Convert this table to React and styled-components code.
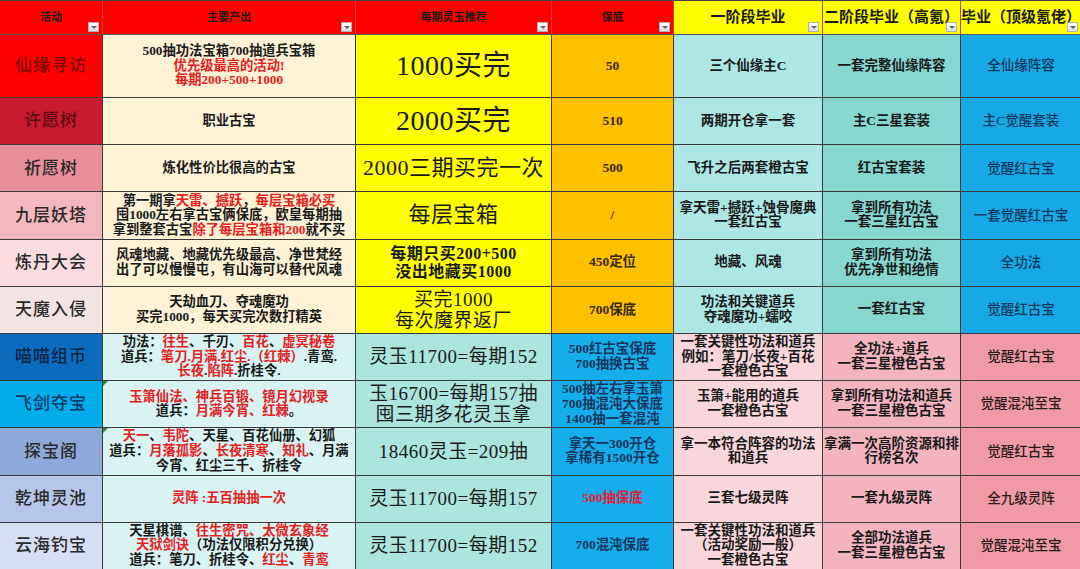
import styled, { createGlobalStyle } from "styled-components";

const GlobalStyle = createGlobalStyle`
  html, body {
    margin: 0;
    padding: 0;
    background: #ffffff;
    overflow: hidden;
  }
`;

const SONG = `"Liberation Serif", "Noto Sans CJK SC", serif`;

/* Styled Components */
const Table = styled.div`
  display: grid;
  grid-template-columns: 103px 253px 196px 122px 149px 138px 1fr;
  grid-template-rows: 34px 63px repeat(10, 47.2px);
  width: 1080px;
  height: 569px;
  overflow: hidden;
  border-top: 1px solid #444;
  box-sizing: border-box;
  font-family: ${SONG};
`;

const HeadCell = styled.div`
  position: relative;
  display: flex;
  align-items: center;
  justify-content: center;
  background: ${(p) => p.$bg};
  color: ${(p) => p.$color || "#1a1a1a"};
  font-size: ${(p) => p.$size || 11}px;
  font-weight: 700;
  border-right: 1px solid #c04040;
  border-bottom: 1px solid #555;
  padding-bottom: 4px;
  box-sizing: border-box;
  white-space: nowrap;
`;

const FilterBtn = styled.span`
  position: absolute;
  right: 3px;
  bottom: 2px;
  width: 11px;
  height: 10px;
  background: linear-gradient(#ffffff, #dcdcdc);
  border: 1px solid #b0b0b0;
  box-sizing: border-box;

  &::after {
    content: "";
    position: absolute;
    left: 2px;
    top: 3px;
    border-left: 3px solid transparent;
    border-right: 3px solid transparent;
    border-top: 3px solid #4a6a8a;
  }
`;

const Cell = styled.div`
  position: relative;
  display: flex;
  flex-direction: column;
  align-items: center;
  justify-content: center;
  text-align: center;
  background: ${(p) => p.$bg};
  color: ${(p) => p.$color || "#1a1a1a"};
  font-size: ${(p) => p.$size || 13}px;
  font-weight: ${(p) => p.$weight || 700};
  line-height: ${(p) => p.$lh || 1.15};
  letter-spacing: ${(p) => p.$ls || 0}px;
  border-right: 1px solid #3a3a3a;
  border-bottom: 1px solid #3a3a3a;
  box-sizing: border-box;
  white-space: nowrap;
  overflow: hidden;
`;

const Line = styled.div``;

const Red = styled.span`
  color: #e3211f;
`;

const Marker = styled.span`
  position: absolute;
  left: 0;
  top: 0;
  border-top: 5px solid #1f8a3a;
  border-right: 5px solid transparent;
`;

const headers = [
  { t: "活动", bg: "#ff0000", size: 11 },
  { t: "主要产出", bg: "#ff0000", size: 11 },
  { t: "每期灵玉推荐", bg: "#ff0000", size: 11 },
  { t: "保底", bg: "#ff0000", size: 11 },
  { t: "一阶段毕业", bg: "#ffff00", size: 15 },
  { t: "二阶段毕业（高氪）", bg: "#ffff00", size: 15 },
  { t: "毕业（顶级氪佬）", bg: "#ffff00", size: 15 },
];

const L = (...parts) => parts;

const rows = [
  {
    name: "仙缘寻访", nameBg: "#ff0000", nameColor: "#7a0a0a",
    main: [L("500抽功法宝箱700抽道兵宝箱"), L(["优先级最高的活动!"]), L(["每期200+500+1000"])],
    jade: ["1000买完"], jadeSize: 28,
    floor: ["50"], c5: ["三个仙缘主C"], c6: ["一套完整仙缘阵容"], c7: ["全仙缘阵容"],
  },
  {
    name: "许愿树", nameBg: "#c81a30", nameColor: "#5e0a12",
    main: [L("职业古宝")],
    jade: ["2000买完"], jadeSize: 28,
    floor: ["510"], c5: ["两期开仓拿一套"], c6: ["主C三星套装"], c7: ["主C觉醒套装"],
  },
  {
    name: "祈愿树", nameBg: "#e88f9b",
    main: [L("炼化性价比很高的古宝")],
    jade: ["2000三期买完一次"], jadeSize: 22,
    floor: ["500"], c5: ["飞升之后两套橙古宝"], c6: ["红古宝套装"], c7: ["觉醒红古宝"],
  },
  {
    name: "九层妖塔", nameBg: "#f2b7bf",
    main: [
      L("第一期拿", ["天雷、撼跃"], "，", ["每层宝箱必买"]),
      L("囤1000左右拿古宝俩保底，欧皇每期抽"),
      L("拿到整套古宝", ["除了每层宝箱和200"], "就不买"),
    ],
    jade: ["每层宝箱"], jadeSize: 22,
    floor: ["/"], c5: ["拿天雷+撼跃+蚀骨魔典", "一套红古宝"], c6: ["拿到所有功法", "一套三星红古宝"], c7: ["一套觉醒红古宝"],
  },
  {
    name: "炼丹大会", nameBg: "#f9dbe0",
    main: [L("风魂地藏、地藏优先级最高、净世梵经"), L("出了可以慢慢屯，有山海可以替代风魂")],
    jade: ["每期只买200+500", "没出地藏买1000"], jadeSize: 16, jadeWeight: 700,
    floor: ["450定位"], c5: ["地藏、风魂"], c6: ["拿到所有功法", "优先净世和绝情"], c7: ["全功法"],
  },
  {
    name: "天魔入侵", nameBg: "#f3e4e4",
    main: [L("天劫血刀、夺魂魔功"), L("买完1000，每天买完次数打精英")],
    jade: ["买完1000", "每次魔界返厂"], jadeSize: 19,
    floor: ["700保底"], c5: ["功法和关键道兵", "夺魂魔功+蠕咬"], c6: ["一套红古宝"], c7: ["觉醒红古宝"],
  },
  {
    name: "喵喵组币", nameBg: "#0b6cbe", nameColor: "#0c2444",
    main: [
      L("功法：", ["往生"], "、千刃、", ["百花"], "、", ["虚冥秘卷"]),
      L("道兵：", ["笔刀.月满.红尘.（红棘）"], ".青鸾."),
      L(["长夜"], ".", ["陷阵"], ".折桂令."),
    ],
    jade: ["灵玉11700=每期152"], jadeSize: 19,
    floor: ["500红古宝保底", "700抽换古宝"], c5: ["一套关键性功法和道兵", "例如：笔刀/长夜+百花", "一套橙色古宝"], c6: ["全功法+道兵", "一套三星橙色古宝"], c7: ["觉醒红古宝"],
  },
  {
    name: "飞剑夺宝", nameBg: "#02adec", nameColor: "#0c3866", marker: true,
    main: [L(["玉箫仙法、神兵百锻、镜月幻视录"]), L("道兵：", ["月满今宵、红棘"], "。")],
    jade: ["玉16700=每期157抽", "囤三期多花灵玉拿"], jadeSize: 19,
    floor: ["500抽左右拿玉箫", "700抽混沌大保底", "1400抽一套混沌"], c5: ["玉箫+能用的道兵", "一套橙色古宝"], c6: ["拿到所有功法和道兵", "一套三星橙色古宝"], c7: ["觉醒混沌至宝"],
  },
  {
    name: "探宝阁", nameBg: "#8ea8d9", marker: true,
    main: [
      L(["天一"], "、", ["韦陀"], "、天星、百花仙册、幻狐"),
      L("道兵：", ["月落孤影"], "、", ["长夜清寒"], "、", ["知礼"], "、月满"),
      L("今宵、红尘三千、折桂令"),
    ],
    jade: ["18460灵玉=209抽"], jadeSize: 19,
    floor: ["拿天一300开仓", "拿稀有1500开仓"], c5: ["拿一本符合阵容的功法", "和道兵"], c6: ["拿满一次高阶资源和排", "行榜名次"], c7: ["觉醒红古宝"],
  },
  {
    name: "乾坤灵池", nameBg: "#b6c6e8",
    main: [L(["灵阵 :五百抽抽一次"])],
    jade: ["灵玉11700=每期157"], jadeSize: 19,
    floor: ["500抽保底"], floorRed: true, c5: ["三套七级灵阵"], c6: ["一套九级灵阵"], c7: ["全九级灵阵"],
  },
  {
    name: "云海钓宝", nameBg: "#d5def2",
    main: [
      L("天星棋谱、", ["往生密咒、太微玄象经"]),
      L(["天狱剑诀"], "（功法仅限积分兑换）"),
      L("道兵：笔刀、折桂令、", ["红尘"], "、", ["青鸾"]),
    ],
    jade: ["灵玉11700=每期152"], jadeSize: 19,
    floor: ["700混沌保底"], c5: ["一套关键性功法和道兵", "（活动奖励一般）", "一套橙色古宝"], c6: ["全部功法道兵", "一套三星橙色古宝"], c7: ["觉醒混沌至宝"],
  },
];

const top = {
  main: "#fdf2d6",
  jade: "#ffff00",
  floor: "#ffc000",
  c5: "#ace7e4",
  c6: "#85d7cf",
  c7: "#16a9e6",
};

const bottom = {
  main: "#d8f3f2",
  jade: "#abe5dd",
  floor: "#16aeea",
  c5: "#f8d6dc",
  c6: "#f3b4c0",
  c7: "#f09aa7",
};

const renderParts = (parts) =>
  parts.map((p, i) => (Array.isArray(p) ? <Red key={i}>{p[0]}</Red> : <span key={i}>{p}</span>));

const lines = (arr) => arr.map((t, i) => <Line key={i}>{t}</Line>);

const App = () => {
  return (
    <>
      <GlobalStyle />
      <Table>
        {headers.map((h) => (
          <HeadCell key={h.t} $bg={h.bg} $size={h.size}>
            {h.t}
            <FilterBtn />
          </HeadCell>
        ))}

        {rows.map((r, i) => {
          const pal = i < 6 ? top : bottom;
          return [
            <Cell key={r.name + "n"} $bg={r.nameBg} $color={r.nameColor || "#2a2a2a"} $size={17} $weight={500} $ls={1}>
              {r.name}
            </Cell>,
            <Cell key={r.name + "m"} $bg={pal.main} $size={13.3} $lh={1.1}>
              {r.marker && <Marker />}
              {r.main.map((ln, j) => (
                <Line key={j}>{renderParts(ln)}</Line>
              ))}
            </Cell>,
            <Cell key={r.name + "j"} $bg={pal.jade} $size={r.jadeSize} $weight={r.jadeWeight || 400} $lh={1.12} $ls={0.5}>
              {lines(r.jade)}
            </Cell>,
            <Cell key={r.name + "f"} $bg={pal.floor} $size={13.5} $lh={1.08} $color={i < 6 ? "#3a2a10" : r.floorRed ? "#e0203a" : "#17355e"}>
              {lines(r.floor)}
            </Cell>,
            <Cell key={r.name + "5"} $bg={pal.c5} $size={13.5} $lh={1.1}>
              {lines(r.c5)}
            </Cell>,
            <Cell key={r.name + "6"} $bg={pal.c6} $size={13.5} $lh={1.1}>
              {lines(r.c6)}
            </Cell>,
            <Cell key={r.name + "7"} $bg={pal.c7} $size={13.5} $weight={500} $color={i < 6 ? "#14385c" : "#2a1a1a"}>
              {lines(r.c7)}
            </Cell>,
          ];
        })}
      </Table>
    </>
  );
};

export default App;
